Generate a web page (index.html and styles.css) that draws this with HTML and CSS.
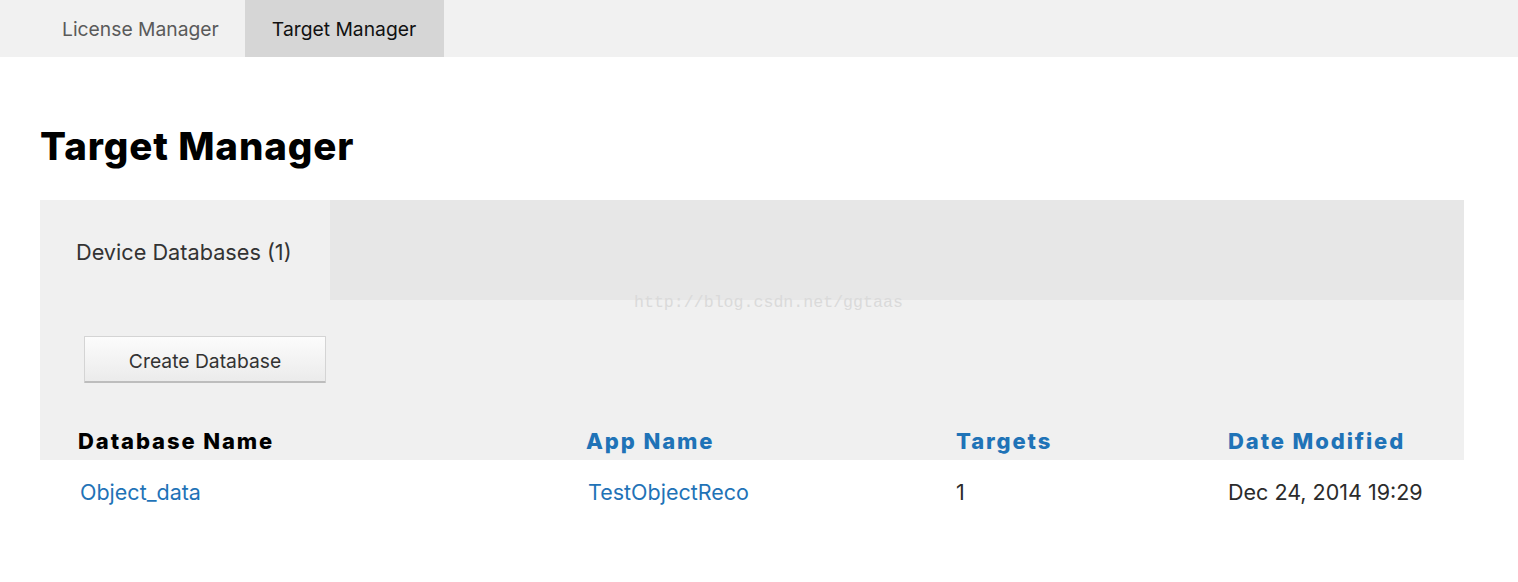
FILE: index.html
```html
<!DOCTYPE html>
<html lang="en">
<head>
    <meta charset="UTF-8">
    <title>Target Manager</title>
    <link rel="stylesheet" href="styles.css">
</head>
<body>
    <div class="topnav">
        <a class="navtab">License Manager</a>
        <a class="navtab active">Target Manager</a>
    </div>

    <div class="content">
        <h1>Target Manager</h1>

        <div class="panel">
            <div class="tabs">
                <div class="tab current">Device Databases (1)</div>
                <div class="tab-rest"></div>
                <span class="watermark">http://blog.csdn.net/ggtaas</span>
            </div>

            <div class="actions">
                <button class="btn">Create Database</button>
            </div>

            <div class="row head">
                <div class="cell plain">Database Name</div>
                <div class="cell">App Name</div>
                <div class="cell">Targets</div>
                <div class="cell">Date Modified</div>
            </div>
        </div>

        <div class="row body">
            <div class="cell link">Object_data</div>
            <div class="cell link">TestObjectReco</div>
            <div class="cell">1</div>
            <div class="cell">Dec 24, 2014 19:29</div>
        </div>
    </div>
</body>
</html>
```

FILE: styles.css
```css
/* Estilo Geral */
body {
    margin: 0;
    padding: 0;
    font-family: 'Inter', 'Roboto', sans-serif;
    background: #fff;
    color: #333;
}

.topnav {
    display: flex;
    height: 57px;
    background: #f1f1f1;
    padding-left: 35px;
}

.navtab {
    display: flex;
    align-items: center;
    padding: 1px 26px 0 27px;
    font-size: 19.3px;
    color: #5a5a5a;
}

.navtab.active {
    padding: 1px 28px 0 27px;
    background: #d6d6d6;
    color: #111;
}

.content {
    padding: 0 54px 0 40px;
}

h1 {
    margin: 66px 0 31px;
    font-size: 38.5px;
    line-height: 46px;
    font-weight: 800;
    color: #000;
    letter-spacing: 0.9px;
}

.panel {
    background: #f0f0f0;
}

.tabs {
    position: relative;
    display: flex;
    height: 100px;
}

.tab {
    width: 290px;
    display: flex;
    align-items: center;
    padding: 3px 0 0 36px;
    box-sizing: border-box;
    font-size: 21.7px;
    color: #333;
}

.tab-rest {
    flex: 1;
    background: #e7e7e7;
}

.watermark {
    position: absolute;
    left: 594px;
    top: 93px;
    font-family: 'Liberation Mono', monospace;
    font-size: 16.6px;
    color: #dadada;
}

.actions {
    padding: 36px 0 0 44px;
    height: 84px;
}

.btn {
    width: 242px;
    height: 47px;
    padding-top: 5px;
    font-family: inherit;
    font-size: 19.3px;
    color: #333;
    background: linear-gradient(#fcfcfc, #ebebeb);
    border: 1px solid #d4d4d4;
    border-bottom: 2px solid #bdbdbd;
    border-radius: 1px;
    cursor: pointer;
}

.row {
    display: grid;
    grid-template-columns: 508px 370px 272px auto;
    padding-left: 38px;
}

.row.head {
    height: 40px;
    padding-top: 2px;
    box-sizing: border-box;
    align-items: center;
}

.head .cell {
    font-size: 22px;
    font-weight: 800;
    letter-spacing: 1.9px;
    color: #1f73b7;
}

.head .cell.plain {
    color: #000;
}

.row.body {
    height: 64px;
    align-items: center;
    padding-left: 40px;
    grid-template-columns: 508px 368px 272px auto;
}

.body .cell {
    font-size: 21.5px;
    color: #2b2b2b;
}

.body .cell.link {
    color: #1f73b7;
}
```
